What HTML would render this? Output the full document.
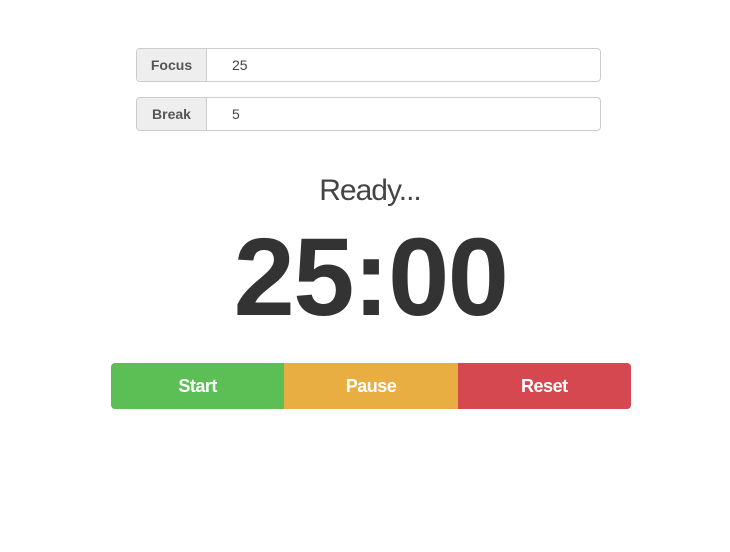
<!DOCTYPE html>
<html><head><style>
*{box-sizing:border-box}
body{margin:0;background:#fff;font-family:"Liberation Sans",Arial,sans-serif;width:730px;height:552px;position:relative;overflow:hidden}
.grp{position:absolute;left:136px;width:465px;height:34px;border:1px solid #ccc;border-radius:4px;display:flex;font-size:14px;color:#555}
.add{width:70px;background:#eee;border-right:1px solid #ccc;font-weight:bold;text-align:center;line-height:32px;border-radius:4px 0 0 4px}
.val{padding-left:25px;line-height:32px;color:#444}
.ready{position:absolute;top:174px;left:0;width:740px;text-align:center;font-size:30px;color:#444;letter-spacing:-1px}
.time{position:absolute;top:214px;left:0;width:741px;text-align:center;font-size:110px;font-weight:bold;color:#333;letter-spacing:-1.5px;line-height:128px}
.btns{position:absolute;left:111px;top:363px;width:520px;height:46px;display:flex;border-radius:4px;overflow:hidden}
.btns div{flex:1;color:#fff;font-size:18px;font-weight:bold;text-align:center;line-height:46px;letter-spacing:-0.5px}
</style></head><body>
<div class="grp" style="top:48px"><div class="add">Focus</div><div class="val">25</div></div>
<div class="grp" style="top:97px"><div class="add">Break</div><div class="val">5</div></div>
<div class="ready">Ready...</div>
<div class="time">25:00</div>
<div class="btns"><div style="background:#5cbf55">Start</div><div style="background:#e9ae42">Pause</div><div style="background:#d5484f">Reset</div></div>
</body></html>
